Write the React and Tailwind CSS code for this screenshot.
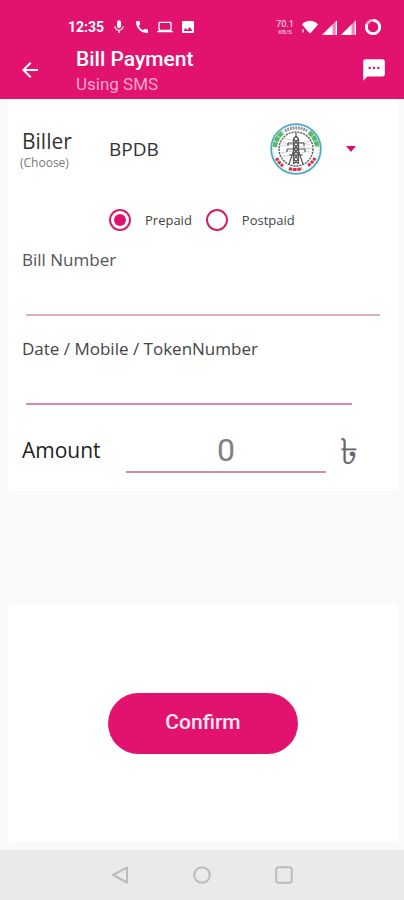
import React, { useState } from 'react';
import { MdMic, MdCall, MdLaptop, MdImage, MdArrowBack, MdTextsms } from 'react-icons/md';

function StatusBar() {
  return (
    <div className="flex items-center justify-between pt-4 pl-[68px] pr-[22px] text-white">
      <div className="flex h-[22px] items-center gap-[7px]">
        <span className="text-sm font-bold">12:35</span>
        <MdMic className="size-4" />
        <MdCall className="size-4" />
        <MdLaptop className="size-4" />
        <MdImage className="size-4" />
      </div>
      <div className="flex h-[22px] items-center gap-1">
        <div className="flex flex-col items-center pr-1 text-[#f9c4dc]">
          <span className="text-[9px] leading-[9px] font-medium">70.1</span>
          <span className="text-[6px] leading-[6px] font-medium">KB/S</span>
        </div>
        <svg viewBox="0 0 16 14" className="h-[14px] w-4" fill="currentColor">
          <path d="M0 4.500C2 2 5 .8 8 .8s6 1.200 8 3.700L9.200 12.600q-1.200 1.200-2.400 0z" />
          <path d="M0 9.500h2v3H0z" opacity=".6" />
        </svg>
        <SignalIcon />
        <SignalIcon />
        <svg viewBox="0 0 18 18" className="ml-1 size-[18px]" fill="none" stroke="currentColor">
          <circle cx="9" cy="9" r="6.700" strokeWidth="2.600" opacity=".65" />
          <path d="M9 2.300a6.700 6.700 0 1 1-6.200 4.200" strokeWidth="2.800" />
        </svg>
      </div>
    </div>
  );
}

function SignalIcon() {
  return (
    <svg viewBox="0 0 15 15" className="size-[15px]" fill="currentColor">
      <path d="M15 0v15H0z" opacity=".5" />
      <path d="M10.500 4.500V15H0zM13.800 1.200h1.200V15h-1.200z" />
    </svg>
  );
}

function BillerLogo() {
  return (
    <svg viewBox="0 0 52 52" className="size-[52px]" fill="none">
      <circle cx="26" cy="26" r="24.800" fill="#fff" stroke="#4fa9c4" strokeWidth="1.800" />
      <circle cx="26" cy="26" r="23" stroke="#b9dce6" strokeWidth="1" strokeDasharray="2 1.500" />
      <path d="M4.800 24A21 21 0 0 1 13 9.200" stroke="#55b862" strokeWidth="4.500" strokeDasharray="5 .6" />
      <path d="M39 9.200A21 21 0 0 1 47.200 24" stroke="#55b862" strokeWidth="4.500" strokeDasharray="5 .6" />
      <path d="M15 8A21 21 0 0 1 37 8" stroke="#8b9094" strokeWidth="3" strokeDasharray="1.800 .9" />
      <path d="M6.500 35A21 21 0 0 0 13 43" stroke="#d5303d" strokeWidth="3" strokeDasharray="3 .8" />
      <path d="M19 45.500A21 21 0 0 0 32 45.500" stroke="#d5303d" strokeWidth="3" strokeDasharray="3.500 .7" />
      <path d="M38 42.500A21 21 0 0 0 45 35" stroke="#d5303d" strokeWidth="3" strokeDasharray="3 .8" />
      <circle cx="26" cy="26" r="17" stroke="#55585a" strokeWidth="1.300" strokeDasharray="2.200 .8" />
      <path d="M10 23l32-5M10 30l32-5M12 34l28-6M11 19l30 7M13 15l27 7" stroke="#bfc3c6" strokeWidth=".7" />
      <path
        d="M26 10v5M23.500 41V16l2.500-3 2.500 3v25M19 41l4.500-13M33 41l-4.500-13M18 20h16M17 26h18M19 32h14M18 20v3M34 20v3M17 26v3M35 26v3M23.500 16l5 5-5 5 5 5-5 5 5 5M28.500 16l-5 5 5 5-5 5 5 5-5 5"
        stroke="#54575a"
        strokeWidth="1.200"
      />
    </svg>
  );
}

function Radio({ label, value, selected, onChange }) {
  return (
    <label className="flex items-center gap-[14px] text-[13px] leading-5 text-[#444]">
      <span className="relative flex size-[22px] items-center justify-center">
        <input
          type="radio"
          name="type"
          value={value}
          checked={selected}
          onChange={() => onChange(value)}
          className="size-[22px] appearance-none rounded-full border-2 border-[#d0226c]"
        />
        {selected && <span className="pointer-events-none absolute size-3 rounded-full bg-[#e2136e]" />}
      </span>
      {label}
    </label>
  );
}

function App() {
  const [type, setType] = useState('prepaid');
  const [billNumber, setBillNumber] = useState('');
  const [token, setToken] = useState('');
  const [amount, setAmount] = useState('');

  return (
    <div className="flex min-h-screen flex-col bg-[#fafafa] font-['Open_Sans',sans-serif]">
      <header className="bg-[#e2136e] pb-1 font-[Roboto,sans-serif]">
        <StatusBar />
        <div className="flex items-center justify-between pt-[7px] pr-[17px] pl-[18px] text-white">
          <div className="flex items-center gap-[34px]">
            <button type="button" aria-label="Back">
              <MdArrowBack className="size-6" />
            </button>
            <div>
              <h1 className="text-[21px] leading-7 font-medium">Bill Payment</h1>
              <p className="text-[17px] leading-[22px] text-[#f9a8cb]">Using SMS</p>
            </div>
          </div>
          <button type="button" aria-label="Messages">
            <MdTextsms className="size-[26px]" />
          </button>
        </div>
      </header>

      <main className="flex flex-1 flex-col pr-[6px] pl-2">
        <form id="bill" className="rounded-b bg-white pb-[18px]">
          <div className="flex items-center pt-6 pl-3">
            <label htmlFor="biller" className="flex w-[81px] flex-col">
              <span className="pl-[2px] text-[21px] leading-7 text-[#333]">Biller</span>
              <span className="text-xs leading-4 text-[#777]">(Choose)</span>
            </label>
            <div className="relative flex flex-1 items-center">
              <select id="biller" className="h-[52px] w-full appearance-none bg-transparent pl-2 text-[19px] text-[#333]">
                <option>BPDB</option>
              </select>
              <div className="pointer-events-none absolute right-[42px] flex items-center gap-6">
                <BillerLogo />
                <svg viewBox="0 0 10 6" className="h-[6px] w-[10px]" fill="#d6107a">
                  <path d="M0 0h10L5 6z" />
                </svg>
              </div>
            </div>
          </div>

          <div className="flex gap-[14px] pt-[34px] pl-[101px]">
            <Radio label="Prepaid" value="prepaid" selected={type === 'prepaid'} onChange={setType} />
            <Radio label="Postpaid" value="postpaid" selected={type === 'postpaid'} onChange={setType} />
          </div>

          <div className="pt-4 pr-[22px] pl-[14px]">
            <label htmlFor="billNumber" className="block text-[17px] leading-[25px] text-[#555]">Bill Number</label>
            <input
              id="billNumber"
              value={billNumber}
              onChange={(e) => setBillNumber(e.target.value)}
              className="ml-1 block h-11 w-full border-b-2 border-[#dcafc0] outline-none"
            />
          </div>

          <div className="pt-5 pr-[50px] pl-[14px]">
            <label htmlFor="token" className="block text-[17px] leading-[25px] text-[#444]">Date / Mobile / TokenNumber</label>
            <input
              id="token"
              value={token}
              onChange={(e) => setToken(e.target.value)}
              className="ml-1 block h-11 w-full border-b-2 border-[#d48ba3] outline-none"
            />
          </div>

          <div className="flex items-center pt-6 pr-10 pl-[14px]">
            <label htmlFor="amount" className="w-[104px] text-[21px] text-[#222]">Amount</label>
            <input
              id="amount"
              value={amount}
              placeholder="0"
              onChange={(e) => setAmount(e.target.value)}
              className="h-11 min-w-0 flex-1 border-b-2 border-[#d48ba3] text-center font-[Roboto,sans-serif] text-[32px] text-[#777] outline-none placeholder:text-[#808080]"
            />
            <span className="ml-[14px] text-[36px] leading-9 text-[#666]">৳</span>
          </div>
        </form>

        <div className="mt-[113px] mb-2 flex flex-1 items-center justify-center rounded bg-white">
          <button
            type="submit"
            form="bill"
            className="h-[61px] w-[190px] rounded-full bg-[#e2136e] font-[Roboto,sans-serif] text-[21px] font-medium text-[#fde8f1]"
          >
            Confirm
          </button>
        </div>
      </main>

      <nav className="flex h-[50px] items-center justify-center gap-16 bg-[#eaeaea] text-[#bcbcbc]">
        <button type="button" aria-label="Go back">
          <svg viewBox="0 0 18 18" className="size-[18px]" fill="none" stroke="currentColor" strokeWidth="2" strokeLinejoin="round">
            <path d="M16 1.500v15L2 9z" />
          </svg>
        </button>
        <button type="button" aria-label="Home">
          <svg viewBox="0 0 18 18" className="size-[18px]" fill="none" stroke="currentColor" strokeWidth="2">
            <circle cx="9" cy="9" r="7.800" />
          </svg>
        </button>
        <button type="button" aria-label="Recent apps">
          <svg viewBox="0 0 18 18" className="size-[18px]" fill="none" stroke="currentColor" strokeWidth="2">
            <rect x="1.200" y="1.200" width="15.600" height="15.600" rx="2.500" />
          </svg>
        </button>
      </nav>
    </div>
  );
}

export default App;
